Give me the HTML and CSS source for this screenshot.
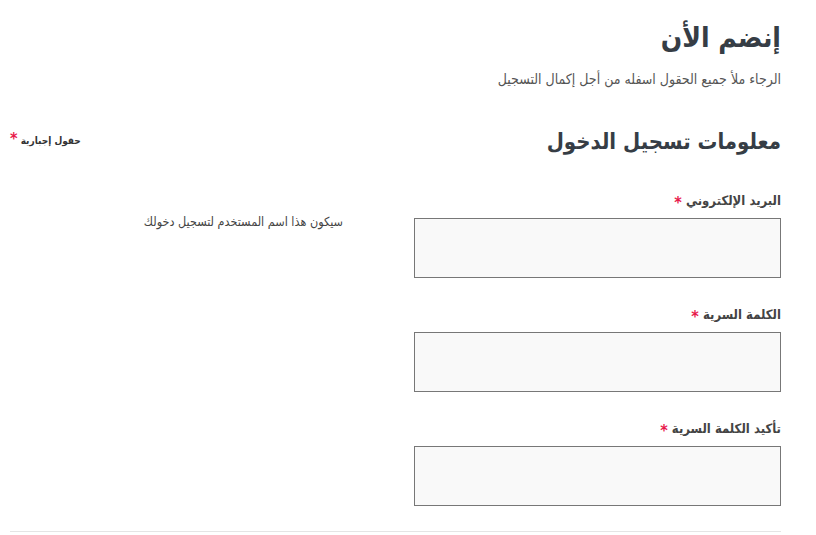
FILE: index.html
```html
<!doctype html>
<html lang="ar" dir="rtl">
<head>
  <meta charset="UTF-8">
  <meta name="viewport" content="width=device-width, initial-scale=1.0">
  <title>إنضم الأن</title>
  <link rel="stylesheet" href="styles.css">
</head>
<body>
  <main class="register">
    <header class="page-head">
      <h1>إنضم الأن</h1>
      <p>الرجاء ملأ جميع الحقول اسفله من أجل إكمال التسجيل</p>
    </header>
    <div class="section-head">
      <h2>معلومات تسجيل الدخول</h2>
      <span class="required-note">حقول إجبارية <span class="star">*</span></span>
    </div>
    <form class="fields">
      <div class="field">
        <div class="control">
          <label>البريد الإلكتروني <span class="star">*</span></label>
          <input type="email">
        </div>
        <p class="hint">سيكون هذا اسم المستخدم لتسجيل دخولك</p>
      </div>
      <div class="field">
        <div class="control">
          <label>الكلمة السرية <span class="star">*</span></label>
          <input type="password">
        </div>
      </div>
      <div class="field">
        <div class="control">
          <label>تأكيد الكلمة السرية <span class="star">*</span></label>
          <input type="password">
        </div>
      </div>
    </form>
    <hr>
  </main>
</body>
</html>
```

FILE: styles.css
```css
body {
  margin: 0;
  background: #fff;
  font-family: "DejaVu Sans Condensed", "DejaVu Sans", sans-serif;
  color: #333;
}
.register {
  width: 771px;
  margin: 0 35px 0 10px;
  padding-top: 18px;
}
.page-head h1 {
  margin: 0;
  font-size: 28px;
  font-weight: bold;
  color: #363d45;
  line-height: 40px;
}
.page-head p {
  margin: 13px 0 0;
  font-size: 14px;
  color: #555;
}
.section-head {
  display: flex;
  justify-content: space-between;
  align-items: center;
  margin-top: 42px;
}
.section-head h2 {
  margin: 0;
  font-size: 22px;
  font-weight: bold;
  color: #363d45;
}
.required-note {
  font-size: 10px;
  font-weight: bold;
  color: #333;
  align-self: flex-start;
  margin-top: 2px;
}
.star {
  color: #e8194b;
  font-size: 16px;
  line-height: 1;
}
.fields {
  margin-top: 38px;
}
.field {
  display: grid;
  grid-template-columns: 367px 1fr;
  column-gap: 71px;
  margin-bottom: 28px;
}
.field:last-child {
  margin-bottom: 0;
}
.control label {
  display: block;
  font-size: 13px;
  font-weight: bold;
  color: #444;
  line-height: 17px;
  margin-bottom: 9px;
}
.control label .star {
  line-height: 0;
  vertical-align: -3px;
}
.control input {
  display: block;
  box-sizing: border-box;
  width: 100%;
  height: 60px;
  border: 1px solid #777;
  background: #f9f9f9;
  margin: 0;
}
.hint {
  margin: 22px 0 0;
  font-size: 12.5px;
  color: #444;
}
hr {
  border: 0;
  border-top: 1px solid #e5e5e5;
  margin: 25px 0 0;
}
```
